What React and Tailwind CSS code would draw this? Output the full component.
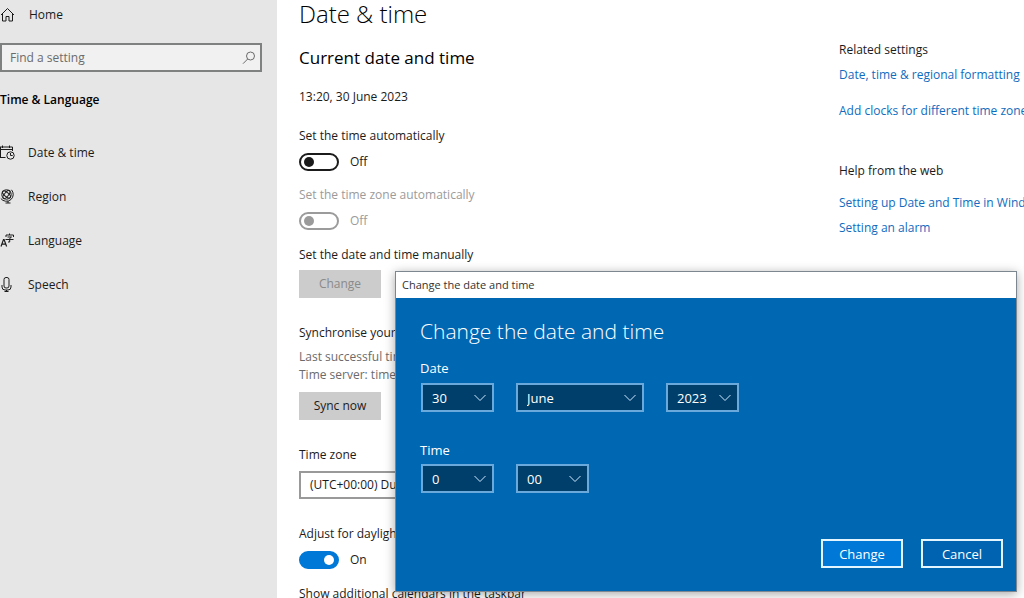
import { useState } from 'react'

const HomeIcon = () => (
  <svg viewBox="0 0 16 16" className="size-4 shrink-0" fill="none" stroke="currentColor">
    <path d="M1 8 7.500 1.500 14 8M2.500 6.700V14h3.500V9.500h3V14h3.500V6.700" />
  </svg>
)

const CalendarIcon = () => (
  <svg viewBox="0 0 16 16" className="size-4 shrink-0" fill="none" stroke="currentColor">
    <path d="M0 2h12.500v4M0 4.500h12.500M2.500.5v2.500M9.500.5v2.500M0 12.500h5.500M.5 2v10.500" />
    <circle cx="10.500" cy="10.500" r="3.700" />
    <path d="M10.500 8v2.500h2.200" />
  </svg>
)

const RegionIcon = () => (
  <svg viewBox="0 0 16 16" className="size-4 shrink-0" fill="none" stroke="currentColor">
    <circle cx="6.500" cy="5.500" r="4.700" />
    <ellipse cx="6.500" cy="5.500" rx="5" ry="2" transform="rotate(40 6.500 5.500)" />
    <ellipse cx="6.500" cy="5.500" rx="2" ry="5" transform="rotate(40 6.500 5.500)" />
    <path d="M11.500.8a7 7 0 0 1-.5 9.700A7 7 0 0 1 .8 9.500M8 12v2M5.500 14h5" />
  </svg>
)

const LanguageIcon = () => (
  <svg viewBox="0 0 16 16" className="size-4 shrink-0" fill="none" stroke="currentColor">
    <path d="m1 13.500 2.500-7h.6l2.500 7M2 11.200h3.700" strokeWidth="1.200" />
    <path d="M9.500.5v1.500M6 4V2h7.500v2M7.500 4h4L9.700 5.500v3.500H8M5.500 6.500h8" />
  </svg>
)

const SpeechIcon = () => (
  <svg viewBox="0 0 16 16" className="size-4 shrink-0" fill="none" stroke="currentColor">
    <rect x="4" y=".5" width="5" height="10.500" rx="2" />
    <path d="M2 8v2a3 3 0 0 0 3 3h3a3 3 0 0 0 3-3V8M6.500 13v2M4.500 14.500h4" />
  </svg>
)

const SearchIcon = () => (
  <svg viewBox="0 0 14 14" className="size-3.5 shrink-0" fill="none" stroke="currentColor">
    <circle cx="8.500" cy="5" r="4" />
    <path d="M5.700 8 1 12.700" />
  </svg>
)

const Chevron = () => (
  <svg
    viewBox="0 0 12 8"
    className="pointer-events-none absolute right-2 top-1/2 h-2 w-3 -translate-y-1/2 text-[#cfe8ff]"
    fill="none"
    stroke="currentColor"
  >
    <path d="m.5 1 5.500 5.500L11.500 1" />
  </svg>
)

const navItems = [
  { label: 'Date & time', Icon: CalendarIcon },
  { label: 'Region', Icon: RegionIcon },
  { label: 'Language', Icon: LanguageIcon },
  { label: 'Speech', Icon: SpeechIcon },
]

function Toggle({ id, label, defaultOn = false, disabled = false }) {
  const [on, setOn] = useState(defaultOn)

  return (
    <div className={disabled ? 'text-[#9b9b9b]' : 'text-[#1b1b1b]'}>
      <label htmlFor={id} className="block">
        {label}
      </label>
      <div className="mt-1.5 flex h-5 items-center gap-[11px]">
        <input
          id={id}
          type="checkbox"
          role="switch"
          checked={on}
          disabled={disabled}
          onChange={(e) => setOn(e.target.checked)}
          className="flex h-[18px] w-10 appearance-none items-center rounded-full border-2 border-current px-[3px] before:size-2.5 before:rounded-full before:bg-current checked:justify-end checked:border-[#0078d7] checked:bg-[#0078d7] checked:before:bg-white"
        />
        <span>{on ? 'On' : 'Off'}</span>
      </div>
    </div>
  )
}

function DialogSelect({ label, options, className }) {
  return (
    <div className={`relative text-white ${className}`}>
      <select
        aria-label={label}
        className="block h-[29px] w-full appearance-none border-2 border-[#6aa9dc] bg-[#003e6b] px-[9px] font-medium outline-none"
      >
        {options.map((option) => (
          <option key={option}>{option}</option>
        ))}
      </select>
      <Chevron />
    </div>
  )
}

function Sidebar() {
  return (
    <aside className="w-[277px] shrink-0 bg-[#e6e6e6]">
      <a href="#home" className="mt-[5px] flex items-center gap-[13px]">
        <HomeIcon />
        Home
      </a>
      <div className="mt-[18px] mr-[15px] flex h-[29px] items-center border-2 border-[#7f8180] bg-[#f1f1f1] pr-1 text-[#6b6b6b]">
        <input
          type="text"
          aria-label="Find a setting"
          placeholder="Find a setting"
          className="min-w-0 flex-1 bg-transparent px-2 outline-none placeholder:text-[#6b6b6b]"
        />
        <SearchIcon />
      </div>
      <h2 className="mt-[18px] font-semibold text-black">Time &amp; Language</h2>
      <nav className="mt-[33px] flex flex-col gap-6">
        {navItems.map(({ label, Icon }) => (
          <a key={label} href="#settings" className="flex items-center gap-3">
            <Icon />
            {label}
          </a>
        ))}
      </nav>
    </aside>
  )
}

function DateTimeSettings() {
  return (
    <main className="min-w-0 flex-1 pl-[22px] whitespace-nowrap">
      <h1 className="text-2xl leading-7 font-light text-black">Date &amp; time</h1>
      <h2 className="mt-[18px] text-[17px] leading-6 text-black">Current date and time</h2>
      <p className="mt-[17px] mb-[19px]">13:20, 30 June 2023</p>

      <Toggle id="auto-time" label="Set the time automatically" />
      <div className="mt-[13px]">
        <Toggle id="auto-zone" label="Set the time zone automatically" disabled />
      </div>

      <h3 className="mt-3.5">Set the date and time manually</h3>
      <button disabled className="mt-[5px] block h-7 w-[82px] bg-[#cccccc] text-[#8a8a8a]">
        Change
      </button>

      <h3 className="mt-[25px]">Synchronise your clock</h3>
      <p className="mt-[5px] leading-[18px] text-[#6b6b6b]">
        Last successful time synchronisation
        <br />
        Time server: time.windows.com
      </p>
      <button className="mt-2 block h-7 w-[82px] bg-[#cccccc]">Sync now</button>

      <label htmlFor="zone" className="mt-[25px] block">
        Time zone
      </label>
      <select
        id="zone"
        className="mt-1.5 block h-7 w-[340px] appearance-none border-2 border-[#999999] bg-white px-[9px]"
      >
        <option>(UTC+00:00) Dublin, Edinburgh, Lisbon, London</option>
      </select>

      <div className="mt-[25px]">
        <Toggle id="daylight" label="Adjust for daylight saving time automatically" defaultOn />
      </div>
      <h3 className="mt-3.5">Show additional calendars in the taskbar</h3>
    </main>
  )
}

function RelatedLinks() {
  return (
    <aside className="w-[185px] shrink-0 pt-10 whitespace-nowrap">
      <h2>Related settings</h2>
      <div className="mt-[5px] flex flex-col gap-4 text-[#0f6cc0]">
        <a href="#formatting">Date, time &amp; regional formatting</a>
        <a href="#clocks">Add clocks for different time zones</a>
      </div>
      <h2 className="mt-10">Help from the web</h2>
      <div className="mt-3 flex flex-col gap-[5px] text-[#0f6cc0]">
        <a href="#setup">Setting up Date and Time in Windows</a>
        <a href="#alarm">Setting an alarm</a>
      </div>
    </aside>
  )
}

function ChangeDialog() {
  return (
    <div
      role="dialog"
      aria-labelledby="dialog-title"
      className="absolute top-[271px] right-[7px] left-[395px] border border-[#7d8790] bg-[#0067b3] text-[13px] text-white shadow-[0_2px_10px_rgba(0,0,0,0.35)]"
    >
      <div className="h-[26px] bg-white px-1.5 text-[11px] leading-[26px] text-[#333333]">
        Change the date and time
      </div>
      <div className="pt-[19px] pr-[13px] pb-[23px] pl-6">
        <h2 id="dialog-title" className="text-[21px] leading-7 font-light">
          Change the date and time
        </h2>
        <h3 className="mt-[13px] font-medium">Date</h3>
        <div className="mt-[5px] flex gap-[22px] pl-px">
          <DialogSelect label="Day" options={['30', '29', '28']} className="w-[73px]" />
          <DialogSelect label="Month" options={['June', 'July', 'August']} className="w-32" />
          <DialogSelect label="Year" options={['2023', '2024', '2025']} className="w-[73px]" />
        </div>
        <h3 className="mt-7 font-medium">Time</h3>
        <div className="mt-1 flex gap-[22px] pl-px">
          <DialogSelect label="Hour" options={['0', '1', '2']} className="w-[73px]" />
          <DialogSelect label="Minute" options={['00', '01', '02']} className="w-[73px]" />
        </div>
        <div className="mt-[46px] flex justify-end gap-[18px]">
          <button className="h-[29px] w-[82px] border-2 border-[#e3f6ff] bg-[#0078d7]">Change</button>
          <button className="h-[29px] w-[82px] border-2 border-[#e3f6ff] bg-[#0063b1]">Cancel</button>
        </div>
      </div>
    </div>
  )
}

export default function App() {
  return (
    <div className="relative flex h-screen overflow-hidden bg-white font-['Open_Sans','Noto_Sans',sans-serif] text-xs leading-5 text-[#1b1b1b]">
      <Sidebar />
      <DateTimeSettings />
      <RelatedLinks />
      <ChangeDialog />
    </div>
  )
}
